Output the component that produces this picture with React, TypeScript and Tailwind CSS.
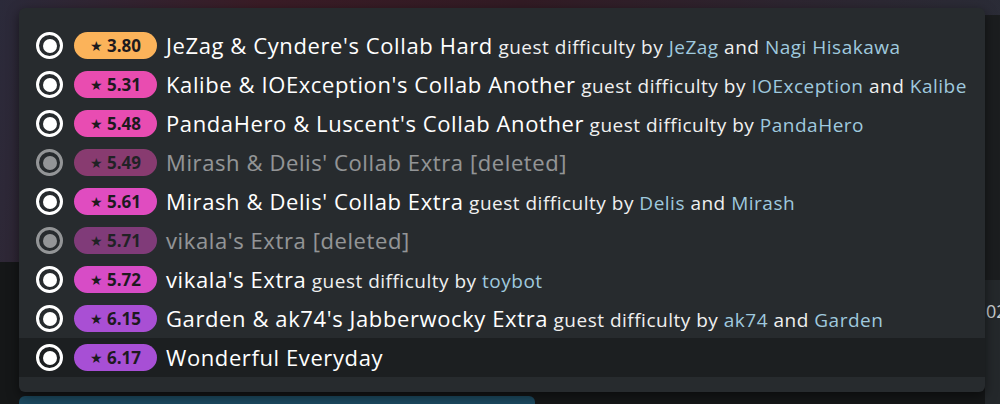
import React from "react"

type Diff = {
  stars: string
  color: string
  name: string
  mappers?: string[]
  deleted?: boolean
  active?: boolean
}

const diffs: Diff[] = [
  { stars: "3.80", color: "bg-[#fbb35a]", name: "JeZag & Cyndere's Collab Hard", mappers: ["JeZag", "Nagi Hisakawa"] },
  { stars: "5.31", color: "bg-[#e94cb0]", name: "Kalibe & IOException's Collab Another", mappers: ["IOException", "Kalibe"] },
  { stars: "5.48", color: "bg-[#e84cb2]", name: "PandaHero & Luscent's Collab Another", mappers: ["PandaHero"] },
  { stars: "5.49", color: "bg-[#e84cb2]", name: "Mirash & Delis' Collab Extra [deleted]", deleted: true },
  { stars: "5.61", color: "bg-[#e04cc0]", name: "Mirash & Delis' Collab Extra", mappers: ["Delis", "Mirash"] },
  { stars: "5.71", color: "bg-[#d84cc4]", name: "vikala's Extra [deleted]", deleted: true },
  { stars: "5.72", color: "bg-[#d74cc6]", name: "vikala's Extra", mappers: ["toybot"] },
  { stars: "6.15", color: "bg-[#a94fd4]", name: "Garden & ak74's Jabberwocky Extra", mappers: ["ak74", "Garden"] },
  { stars: "6.17", color: "bg-[#a74fd5]", name: "Wonderful Everyday", active: true },
]

const Radio = () => (
  <span className="flex h-[27px] w-[27px] shrink-0 items-center justify-center rounded-full border-[3px] border-white">
    <span className="h-[14px] w-[14px] rounded-full bg-white" />
  </span>
)

const Row = ({ d }: { d: Diff }) => (
  <div
    className={`flex h-[39px] items-center pl-[17px] ${d.active ? "bg-[#1c1f21]" : ""} ${d.deleted ? "opacity-50" : ""}`}
  >
    <Radio />
    <span
      className={`ml-[11px] flex h-[27px] w-[83px] shrink-0 items-center justify-center gap-[4px] rounded-full ${d.color} text-[#1d1a1e]`}
    >
      <span className="text-[14px] leading-none">★</span>
      <span className="text-[17px] font-bold leading-none">{d.stars}</span>
    </span>
    <span className="ml-[9px] whitespace-nowrap text-white">
      <span className="text-[22px] font-medium tracking-[0.6px]">{d.name}</span>
      {d.mappers && (
        <span className="text-[19px] tracking-[0.5px] text-[#f0f0f0]">
          {" "}guest difficulty by{" "}
          <span className="text-[#9fc9de]">{d.mappers[0]}</span>
          {d.mappers[1] && (
            <>
              {" "}and <span className="text-[#9fc9de]">{d.mappers[1]}</span>
            </>
          )}
        </span>
      )}
    </span>
  </div>
)

export default function App() {
  return (
    <div
      className="relative h-[404px] w-[1000px] overflow-hidden bg-[#151718]"
      style={{ fontFamily: "'Open Sans', 'Noto Sans', sans-serif" }}
    >
      {/* blurred cover behind the menu */}
      <div className="absolute left-0 top-0 h-[262px] w-[1000px] bg-[linear-gradient(100deg,#2b2a3a_0%,#3a1c26_25%,#321b24_50%,#2d2530_75%,#2a2d38_100%)]" />
      <div className="absolute left-[985px] top-[15px] h-[265px] w-[15px] bg-[#1b1d1f]" />
      <div className="absolute left-[985px] top-[280px] h-[124px] w-[15px] bg-[#24282b]" />
      <div className="absolute left-[986px] top-[298px] text-[18px] text-[#c9cdd0]">02</div>
      <div className="absolute left-[19px] top-[396px] h-[20px] w-[516px] rounded-[6px] bg-[#1c4a60]" />

      {/* difficulty dropdown */}
      <div className="absolute left-[19px] top-[8px] w-[966px] rounded-[6px] bg-[#272b2e] pb-[15px] pt-[18px] shadow-[0_4px_12px_rgba(0,0,0,0.5)]">
        {diffs.map((d) => (
          <Row key={d.stars} d={d} />
        ))}
      </div>
    </div>
  )
}
